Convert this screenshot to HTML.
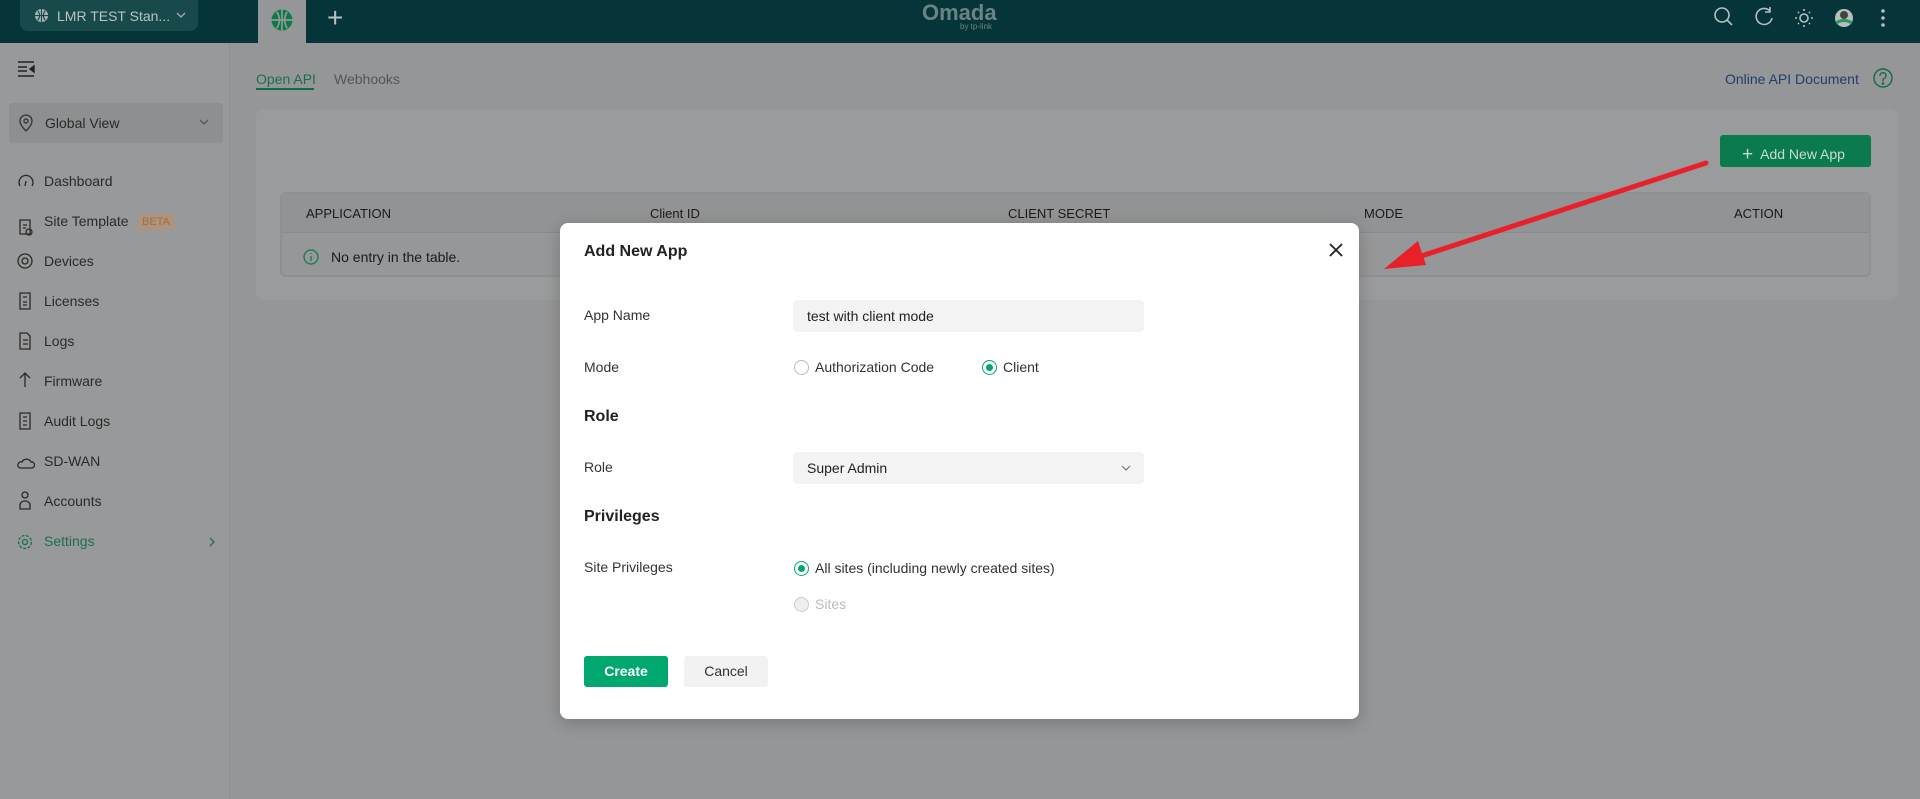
<!DOCTYPE html>
<html><head><meta charset="utf-8"><style>
*{box-sizing:border-box;margin:0;padding:0}
body{width:1920px;height:799px;overflow:hidden;background:#959697;font-family:"Liberation Sans",sans-serif;position:relative;color:#1e1e1e}
.a{position:absolute;white-space:nowrap}
.top{left:0;top:0;width:1920px;height:43px;background:#053538}
.side{left:0;top:43px;width:230px;height:756px;background:#98999a;border-right:1px solid #8e8f90}
.mi{left:44px;font-size:14px;color:#2a2a2a}
.modal{left:560px;top:223px;width:799px;height:496px;background:#fff;border-radius:8px;box-shadow:0 4px 16px rgba(0,0,0,.2)}
.lab{font-size:14px;color:#333}
.h{font-size:16px;font-weight:bold;color:#222}
.inp{background:#f3f3f3;border-radius:4px;height:32px;width:351px;font-size:14px;padding:8px 14px;color:#222}
.rad{width:15px;height:15px;border-radius:50%;border:1px solid #bbb;background:#fff}
.rad.on{border-color:#00a870}
.rad.on:after{content:"";position:absolute;left:3px;top:3px;width:7px;height:7px;border-radius:50%;background:#00a870}
</style></head><body>
<div class="a top"></div>
<div class="a" style="left:20px;top:0;width:178px;height:31px;background:#184a4c;border-radius:0 0 8px 8px"></div>
<svg class="a" style="left:34px;top:8px" width="15" height="15" viewBox="0 0 16 16"><circle cx="8" cy="8" r="7" fill="#aab3b3"/><path d="M1 8h14M8 1v14M4 3q4 5 0 10M12 3q-4 5 0 10" stroke="#184a4c" stroke-width="1.2" fill="none"/></svg>
<div class="a" style="left:57px;top:8px;font-size:14px;color:#b8c2c2">LMR TEST Stan...</div>
<svg class="a" style="left:176px;top:12px" width="10" height="7"><path d="M1 1l4 4 4-4" stroke="#aab" fill="none" stroke-width="1.3"/></svg>
<div class="a" style="left:258px;top:0;width:48px;height:43px;background:#959697"></div>
<svg class="a" style="left:270px;top:8px" width="24" height="24" viewBox="0 0 16 16"><circle cx="8" cy="8" r="7" fill="#0b7b4a"/><path d="M1 8h14M8 1v14M4.5 2.5q3.5 5.5 0 11M11.5 2.5q-3.5 5.5 0 11" stroke="#959697" stroke-width="1.1" fill="none"/></svg>
<div class="a" style="left:327px;top:2px;font-size:28px;color:#b8c2c2;font-weight:300">+</div>
<div class="a" style="left:922px;top:0;font-size:22px;color:#6a8486;font-weight:bold">Omada</div>
<div class="a" style="left:960px;top:22px;font-size:8px;color:#6a8486">by tp-link</div>
<svg class="a" style="left:1712px;top:5px" width="190" height="26" fill="none" stroke="#b5bfbf" stroke-width="1.6">
<circle cx="10" cy="10" r="7"/><path d="M15 15l5 5"/>
<path d="M58 6a8 8 0 1 0 2 7M58 2v5h-5"/>
<circle cx="92" cy="13" r="4"/><path d="M92 4v2M92 20v2M83 13h2M99 13h2M86 7l1 1M98 7l-1 1M86 19l1-1M98 19l-1-1"/>
<circle cx="132" cy="13" r="9" fill="#b5bfbf" stroke="none"/><circle cx="132" cy="10" r="4" fill="#444" stroke="none"/><path d="M124 18q8-5 16 0" stroke="#2a9a5a" stroke-width="3"/>
<circle cx="171" cy="6" r="1" fill="#b5bfbf"/><circle cx="171" cy="13" r="1" fill="#b5bfbf"/><circle cx="171" cy="20" r="1" fill="#b5bfbf"/>
</svg>
<div class="a side"></div>
<svg class="a" style="left:17px;top:61px" width="20" height="16" stroke="#222" stroke-width="1.4"><path d="M1 1h16M1 6h9M1 10h9M1 15h16"/><path d="M17 5v6l-4-3z" fill="#222"/></svg>
<div class="a" style="left:9px;top:103px;width:214px;height:40px;background:#8e8f90;border-radius:4px"></div>
<svg class="a" style="left:19px;top:114px" width="14" height="18" fill="none" stroke="#333" stroke-width="1.3"><path d="M7 17q-6-6-6-10a6 6 0 0 1 12 0q0 4-6 10z"/><circle cx="7" cy="7" r="2"/></svg>
<div class="a mi" style="left:45px;top:115px">Global View</div>
<svg class="a" style="left:199px;top:119px" width="10" height="7"><path d="M1 1l4 4 4-4" stroke="#555" fill="none" stroke-width="1.3"/></svg>
<svg class="a" style="left:17px;top:172px" width="18" height="380" fill="none" stroke="#2a2a2a" stroke-width="1.3">
<path d="M3 14a7 7 0 1 1 12 0M8 14l1-5"/>
<path d="M3 48h10v14H3zM6 53h4M6 56h3"/><circle cx="12" cy="60" r="3"/>
<circle cx="8" cy="89" r="7"/><circle cx="8" cy="89" r="3"/>
<path d="M3 121h10v16H3zM6 125h4M6 130h4M6 133h4"/>
<path d="M3 161h7l3 3v13H3zM6 168h5M6 172h5"/>
<path d="M8 215v-14M3 206l5-5 5 5"/>
<path d="M3 241h10v16H3zM6 245h4M6 249h4M6 253h4"/>
<path d="M3 296h12a3 3 0 0 0 -1-6 5 5 0 0 0-9 0 3 3 0 0 0-2 6z"/>
<circle cx="8" cy="323" r="3"/><path d="M3 337v-4a5 4 0 0 1 10 0v4z"/>
<circle cx="8" cy="370" r="2.5" stroke="#1d6e4e"/><circle cx="8" cy="370" r="6.5" stroke="#1d6e4e" stroke-dasharray="3 1.5"/>
</svg>
<div class="a mi" style="top:173px">Dashboard</div>
<div class="a mi" style="top:213px">Site Template</div>
<div class="a" style="left:137px;top:213px;background:#a89585;color:#b66a2a;font-size:11px;padding:3px 5px;border-radius:3px">BETA</div>
<div class="a mi" style="top:253px">Devices</div>
<div class="a mi" style="top:293px">Licenses</div>
<div class="a mi" style="top:333px">Logs</div>
<div class="a mi" style="top:373px">Firmware</div>
<div class="a mi" style="top:413px">Audit Logs</div>
<div class="a mi" style="top:453px">SD-WAN</div>
<div class="a mi" style="top:493px">Accounts</div>
<div class="a mi" style="top:533px;color:#1d6e4e">Settings</div>
<svg class="a" style="left:209px;top:537px" width="7" height="10"><path d="M1 1l4 4-4 4" stroke="#1d6e4e" fill="none" stroke-width="1.3"/></svg>

<div class="a" style="left:256px;top:71px;font-size:14px;color:#1d6e4e">Open API</div>
<div class="a" style="left:256px;top:88px;width:58px;height:2px;background:#0b6e46"></div>
<div class="a" style="left:334px;top:71px;font-size:14px;color:#555">Webhooks</div>
<div class="a" style="left:1725px;top:71px;font-size:14px;color:#203f6a">Online API Document</div>
<svg class="a" style="left:1873px;top:68px" width="20" height="20" fill="none" stroke="#136a48" stroke-width="1.4"><circle cx="10" cy="10" r="9"/><path d="M7 8a3 3 0 1 1 4 2.5q-1 .5-1 2v1"/><circle cx="10" cy="15.5" r=".6" fill="#136a48"/></svg>
<div class="a" style="left:256px;top:109px;width:1642px;height:191px;background:#9a9b9c;border-radius:8px"></div>
<div class="a" style="left:1720px;top:135px;width:151px;height:32px;background:#0b7a4f;border-radius:3px;color:#c8dccf;font-size:14px;padding:8px 0 0 22px"><span style="font-size:19px;position:relative;top:1px;font-weight:300">+</span>&nbsp; Add New App</div>
<div class="a" style="left:280px;top:192px;width:1591px;height:85px;border:2px solid #8f9091;border-radius:6px;background:#969798"></div>
<div class="a" style="left:282px;top:194px;width:1587px;height:39px;background:#929394;border-bottom:1px solid #8a8b8c;border-radius:5px 5px 0 0"></div>
<div class="a" style="top:206px;left:306px;font-size:13px;color:#1a1a1a">APPLICATION</div>
<div class="a" style="top:206px;left:650px;font-size:13px;color:#1a1a1a">Client ID</div>
<div class="a" style="top:206px;left:1008px;font-size:13px;color:#1a1a1a">CLIENT SECRET</div>
<div class="a" style="top:206px;left:1364px;font-size:13px;color:#1a1a1a">MODE</div>
<div class="a" style="top:206px;left:1734px;font-size:13px;color:#1a1a1a">ACTION</div>
<svg class="a" style="left:303px;top:249px" width="16" height="16" fill="none" stroke="#137a50" stroke-width="1.3"><circle cx="8" cy="8" r="7"/><path d="M8 7v5M8 4v1"/></svg>
<div class="a" style="top:249px;left:331px;font-size:14px;color:#1a1a1a">No entry in the table.</div>

<svg class="a" style="left:1370px;top:155px" width="345" height="125"><path d="M336 8L30 108" stroke="#e8202a" stroke-width="5" stroke-linecap="round"/><path d="M14 114l34-28 8 24z" fill="#e8202a"/></svg>

<div class="a modal"></div>
<div class="a h" style="left:584px;top:243px">Add New App</div>
<svg class="a" style="left:1329px;top:243px" width="14" height="14" stroke="#222" stroke-width="1.8"><path d="M1 1l12 12M13 1L1 13"/></svg>
<div class="a lab" style="left:584px;top:307px">App Name</div>
<div class="a inp" style="left:793px;top:300px">test with client mode</div>
<div class="a lab" style="left:584px;top:359px">Mode</div>
<div class="a rad" style="left:794px;top:360px"></div>
<div class="a lab" style="left:815px;top:359px">Authorization Code</div>
<div class="a rad on" style="left:982px;top:360px"></div>
<div class="a lab" style="left:1003px;top:359px">Client</div>
<div class="a h" style="left:584px;top:408px">Role</div>
<div class="a lab" style="left:584px;top:459px">Role</div>
<div class="a inp" style="left:793px;top:452px">Super Admin</div>
<svg class="a" style="left:1121px;top:465px" width="10" height="7"><path d="M1 1l4 4 4-4" stroke="#777" fill="none" stroke-width="1.2"/></svg>
<div class="a h" style="left:584px;top:508px">Privileges</div>
<div class="a lab" style="left:584px;top:559px">Site Privileges</div>
<div class="a rad on" style="left:794px;top:561px"></div>
<div class="a lab" style="left:815px;top:560px">All sites (including newly created sites)</div>
<div class="a rad" style="left:794px;top:597px;background:#eee;border-color:#ccc"></div>
<div class="a lab" style="left:815px;top:596px;color:#bbb">Sites</div>
<div class="a" style="left:584px;top:656px;width:84px;height:31px;background:#00a870;border-radius:3px;color:#fff;font-size:14px;font-weight:bold;text-align:center;line-height:31px">Create</div>
<div class="a" style="left:684px;top:656px;width:84px;height:31px;background:#f2f2f2;border-radius:3px;color:#333;font-size:14px;text-align:center;line-height:31px">Cancel</div>
</body></html>
